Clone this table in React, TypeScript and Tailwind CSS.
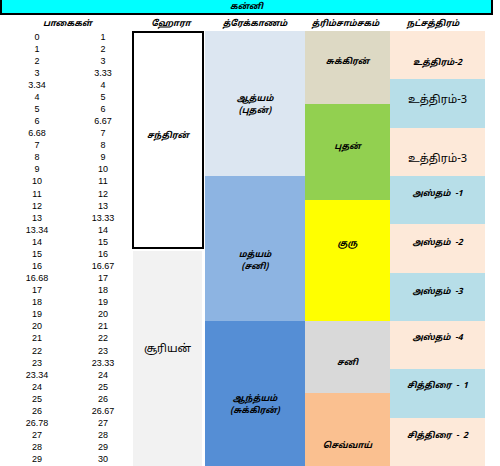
const numbers: [string, string][] = [
  ["0", "1"], ["1", "2"], ["2", "3"], ["3", "3.33"], ["3.34", "4"], ["4", "5"],
  ["5", "6"], ["6", "6.67"], ["6.68", "7"], ["7", "8"], ["8", "9"], ["9", "10"],
  ["10", "11"], ["11", "12"], ["12", "13"], ["13", "13.33"], ["13.34", "14"], ["14", "15"],
  ["15", "16"], ["16", "16.67"], ["16.68", "17"], ["17", "18"], ["18", "19"], ["19", "20"],
  ["20", "21"], ["21", "22"], ["22", "23"], ["23", "23.33"], ["23.34", "24"], ["24", "25"],
  ["25", "26"], ["26", "26.67"], ["26.78", "27"], ["27", "28"], ["28", "29"], ["29", "30"],
];

// one degree row is 435 / 36 px tall
const drekkana = [
  { lines: ["ஆத்யம்", "(புதன்)"], cls: "h-[145px] bg-[#dce6f1] pt-[62px]" },
  { lines: ["மத்யம்", "(சனி)"], cls: "h-[145px] bg-[#8db4e2] pt-[73px]" },
  { lines: ["ஆந்த்யம்", "(சுக்கிரன்)"], cls: "h-[145px] bg-[#558ed5] pt-[72px]" },
];

const trimsamsa = [
  { name: "சுக்கிரன்", cls: "h-[72.5px] bg-[#ddd9c4] pt-[25px]" },
  { name: "புதன்", cls: "h-[96.67px] bg-[#92d050] pt-[37px]" },
  { name: "குரு", cls: "h-[120.83px] bg-[#ffff00] pt-[38px]" },
  { name: "சனி", cls: "h-[72.5px] bg-[#d9d9d9] pt-[36px]" },
  { name: "செவ்வாய்", cls: "h-[72.5px] bg-[#fac090] pt-[47px]" },
];

const nakshatra = [
  { name: "உத்திரம்-2", cls: "bg-[#fde9d9] pt-[26px] font-bold italic text-[8.5px]" },
  { name: "உத்திரம்-3", cls: "bg-[#b7dee8] pt-[15px] text-[11px]" },
  { name: "உத்திரம்-3", cls: "bg-[#fde9d9] pt-[25px] text-[11px]" },
  { name: "அஸ்தம்  -1", cls: "bg-[#b7dee8] pt-[12px] font-bold italic text-[8.5px]" },
  { name: "அஸ்தம்  -2", cls: "bg-[#fde9d9] pt-[13px] font-bold italic text-[8.5px]" },
  { name: "அஸ்தம்  -3", cls: "bg-[#b7dee8] pt-[13px] font-bold italic text-[8.5px]" },
  { name: "அஸ்தம்  -4", cls: "bg-[#fde9d9] pt-[11px] font-bold italic text-[8.5px]" },
  { name: "சித்திரை  -  1", cls: "bg-[#b7dee8] pt-[11px] font-bold italic text-[8.5px]" },
  { name: "சித்திரை  -  2", cls: "bg-[#fde9d9] pt-[12px] font-bold italic text-[8.5px]" },
];

export default function App() {
  return (
    <div className="w-[500px] h-[466px] overflow-hidden bg-white text-black font-['Noto_Sans_Tamil','Noto_Sans','Liberation_Sans',sans-serif]">
      {/* sign title */}
      <div className="w-[493px] h-[15px] bg-[#00ffff] border-x-2 border-b-2 border-black flex items-center justify-center text-[8.5px] font-bold italic leading-[12px]">
        கன்னி
      </div>

      {/* headings */}
      <div className="flex h-[16px] pt-[3px] text-[8.5px] font-bold italic leading-[12px] whitespace-pre">
        <div className="w-[135px] text-center">பாகைகள்</div>
        <div className="w-[72px] text-center">ஹோரா</div>
        <div className="w-[96px] text-center">த்ரேக்காணம்</div>
        <div className="w-[85px] text-center">த்ரிம்சாம்சகம்</div>
        <div className="w-[90px] text-center">நட்சத்திரம்</div>
      </div>

      <div className="flex h-[435px]">
        {/* degree ranges */}
        <div className="w-[132px] flex flex-col font-['Liberation_Sans',sans-serif] text-[9px]">
          {numbers.map(([from, to], i) => (
            <div key={i} className="h-[12.083px] flex items-center leading-none">
              <span className="w-[74px] text-center">{from}</span>
              <span className="w-[58px] text-center">{to}</span>
            </div>
          ))}
        </div>

        {/* hora */}
        <div className="w-[72px] flex flex-col">
          <div className="h-[217.5px] border-2 border-black pt-[97px] text-center text-[8.5px] font-bold italic leading-[12px]">
            சந்திரன்
          </div>
          <div className="flex-1 ml-[1px] mr-[2px] mt-[2px] bg-[#f2f2f2] pt-[91px] text-center text-[11px] leading-[14px]">
            சூரியன்
          </div>
        </div>

        <div className="w-[1px]" />

        {/* drekkana */}
        <div className="w-[100px] flex flex-col">
          {drekkana.map((d, i) => (
            <div key={i} className={`shrink-0 flex flex-col items-center text-[8.5px] font-bold italic leading-[12px] ${d.cls}`}>
              {d.lines.map((l) => (
                <span key={l}>{l}</span>
              ))}
            </div>
          ))}
        </div>

        {/* trimsamsa */}
        <div className="w-[85px] flex flex-col">
          {trimsamsa.map((t) => (
            <div key={t.name} className={`shrink-0 text-center text-[8.5px] font-bold italic leading-[12px] ${t.cls}`}>
              {t.name}
            </div>
          ))}
        </div>

        {/* nakshatra padas */}
        <div className="w-[95px] flex flex-col">
          {nakshatra.map((n, i) => (
            <div key={i} className={`h-[48.333px] shrink-0 text-center leading-[12px] whitespace-pre ${n.cls}`}>
              {n.name}
            </div>
          ))}
        </div>
      </div>
    </div>
  );
}
